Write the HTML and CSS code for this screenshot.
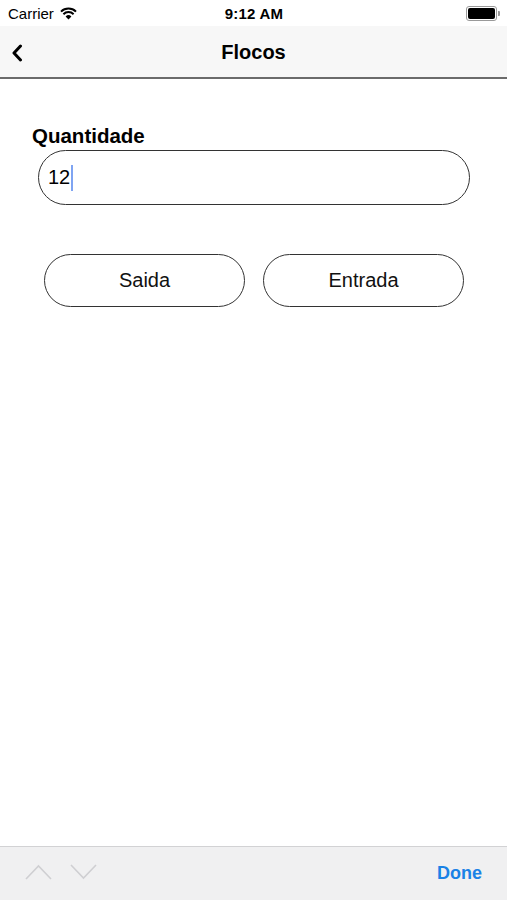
FILE: index.html
```html
<!DOCTYPE html>
<html lang="pt">
<head>
  <meta charset="UTF-8" />
  <meta name="viewport" content="width=device-width, initial-scale=1.0"/>
  <title>Flocos</title>
  <link rel="stylesheet" href="styles.css">
</head>
<body>

<!-- Status bar -->
<div class="status-bar">
  <div class="carrier">
    Carrier
    <svg class="wifi" width="17" height="13" viewBox="0 0 17 13">
      <path d="M8.5 12.5 L5.6 9.4 A4.2 4.2 0 0 1 11.4 9.4 Z" fill="#000"/>
      <path d="M3.4 7.2 A7.3 7.3 0 0 1 13.6 7.2" stroke="#000" stroke-width="2" fill="none"/>
      <path d="M1 4.6 A10.8 10.8 0 0 1 16 4.6" stroke="#000" stroke-width="2" fill="none"/>
    </svg>
  </div>
  <div class="clock">9:12 AM</div>
  <div class="battery">
    <span class="battery-body"><span class="battery-fill"></span></span>
    <span class="battery-tip"></span>
  </div>
</div>

<!-- Navigation bar -->
<header class="nav-bar">
  <svg class="back" width="12" height="18" viewBox="0 0 12 18">
    <path d="M9.5 2 L3 9 L9.5 16" stroke="#000" stroke-width="3" fill="none" stroke-linecap="round" stroke-linejoin="round"/>
  </svg>
  <h1>Flocos</h1>
</header>

<!-- Form -->
<main class="content">
  <label class="field-label">Quantidade</label>
  <div class="text-field">12<span class="caret"></span></div>

  <div class="actions">
    <button class="pill-btn">Saida</button>
    <button class="pill-btn">Entrada</button>
  </div>
</main>

<!-- Keyboard accessory toolbar -->
<footer class="toolbar">
  <div class="arrows">
    <svg width="27" height="16" viewBox="0 0 27 16">
      <path d="M1 15 L13.5 2 L26 15" stroke="#cfcfd2" stroke-width="1.6" fill="none"/>
    </svg>
    <svg width="27" height="16" viewBox="0 0 27 16">
      <path d="M1 1 L13.5 14 L26 1" stroke="#cfcfd2" stroke-width="1.6" fill="none"/>
    </svg>
  </div>
  <span class="done">Done</span>
</footer>

</body>
</html>
```

FILE: styles.css
```css
body {
  margin: 0;
  height: 900px;
  display: flex;
  flex-direction: column;
  font-family: 'Liberation Sans', Arial, sans-serif;
  background: #fff;
  color: #000;
}
.status-bar {
  height: 26px;
  display: flex;
  align-items: center;
  justify-content: space-between;
  padding: 0 7px 0 8px;
  background: #fff;
  font-size: 15px;
}
.carrier {
  display: flex;
  align-items: center;
  gap: 6px;
  flex: 1;
}
.clock {
  font-weight: bold;
  font-size: 15px;
  letter-spacing: 0.2px;
}
.battery {
  flex: 1;
  display: flex;
  align-items: center;
  justify-content: flex-end;
}
.battery-body {
  width: 27px;
  height: 11px;
  border: 1px solid #9a9a9a;
  border-radius: 3px;
  padding: 1px;
  display: flex;
}
.battery-fill {
  flex: 1;
  background: #000;
  border-radius: 2px;
}
.battery-tip {
  width: 2px;
  height: 5px;
  background: #9a9a9a;
  border-radius: 0 1px 1px 0;
  margin-left: 1px;
}
.nav-bar {
  height: 51px;
  background: #f7f7f7;
  border-bottom: 2px solid #6b6b6b;
  display: flex;
  align-items: center;
  justify-content: center;
  position: relative;
}
.nav-bar h1 {
  margin: 2px 0 0;
  font-size: 20px;
  font-weight: bold;
}
.back {
  position: absolute;
  left: 11px;
  top: 18px;
}
.content {
  flex: 1;
  padding: 45px 37px 0 38px;
}
.field-label {
  display: block;
  margin-left: -6px;
  font-size: 20.5px;
  font-weight: bold;
  line-height: 24px;
}
.text-field {
  margin-top: 2px;
  height: 53px;
  border: 1.5px solid #333;
  border-radius: 28px;
  display: flex;
  align-items: center;
  padding-left: 9px;
  font-size: 20px;
}
.caret {
  width: 2px;
  height: 26px;
  background: #7fa4f2;
  margin-left: 1px;
}
.actions {
  margin-top: 49px;
  padding: 0 6px;
  display: flex;
  gap: 18px;
}
.pill-btn {
  flex: 1;
  height: 53px;
  border: 1.5px solid #333;
  border-radius: 27px;
  background: #fff;
  font-family: inherit;
  font-size: 20px;
  color: #111;
  padding: 0;
}
.toolbar {
  height: 53px;
  border-top: 1px solid #d2d2d4;
  background: #f0f0f1;
  display: flex;
  align-items: center;
  justify-content: space-between;
  padding: 0 25px 0 25px;
}
.arrows {
  display: flex;
  gap: 18px;
  margin-top: -4px;
}
.done {
  color: #1a82e6;
  font-weight: bold;
  font-size: 18px;
}
```
